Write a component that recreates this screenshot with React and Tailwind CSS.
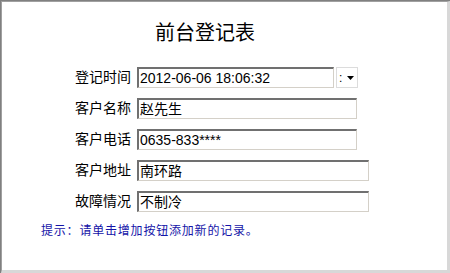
export default function App() {
  const rows = [
    { label: "登记时间", value: "2012-06-06 18:06:32", w: "w-[197px]", picker: true },
    { label: "客户名称", value: "赵先生", w: "w-[220px]" },
    { label: "客户电话", value: "0635-833****", w: "w-[220px]" },
    { label: "客户地址", value: "南环路", w: "w-[232px]" },
    { label: "故障情况", value: "不制冷", w: "w-[232px]" },
  ];

  return (
    <div
      className="w-[450px] h-[273px] bg-white border-t border-l border-[#808080] border-r-0 border-b-0 overflow-hidden"
      style={{ fontFamily: '"Liberation Sans", "Noto Sans CJK SC", sans-serif' }}
    >
      <div className="h-full border-t border-l border-[#a0a0a0] border-r-[3px] border-b-[3px] border-r-[#d8d8d8] border-b-[#d8d8d8]">
        {/* title */}
        <div className="pt-[21px] pl-[153px] text-[20px] leading-[20px] text-black">
          前台登记表
        </div>

        {/* form rows */}
        <div className="mt-[24px] pl-[73px] flex flex-col gap-[10px]">
          {rows.map((r, i) => (
            <div key={i} className="flex items-center h-[21px]">
              <div className="w-[62px] text-[14px] leading-[15px] text-black whitespace-nowrap">
                {r.label}
              </div>
              <div
                className={`${r.w} h-[21px] flex items-center pl-[1px] bg-white border-t-2 border-l-2 border-r border-b border-t-[#707070] border-l-[#707070] border-r-[#d4d0c8] border-b-[#d4d0c8] text-[14px] leading-[16px] text-black whitespace-nowrap`}
              >
                {r.value}
              </div>
              {r.picker && (
                <div className="ml-[2px] w-[22px] h-[21px] flex items-center bg-white border border-[#dcdcdc] pl-[2px]">
                  <span className="text-[12px] leading-[12px] text-black">:</span>
                  <svg width="7" height="4" viewBox="0 0 7 4" className="ml-[5px]">
                    <polygon points="0,0 7,0 3.5,4" fill="#000" />
                  </svg>
                </div>
              )}
            </div>
          ))}
        </div>

        {/* hint */}
        <div className="mt-[12px] pl-[39px] text-[12px] leading-[14px] tracking-[0.8px] text-[#1414a8] whitespace-nowrap">
          提示：请单击增加按钮添加新的记录。
        </div>
      </div>
    </div>
  );
}
